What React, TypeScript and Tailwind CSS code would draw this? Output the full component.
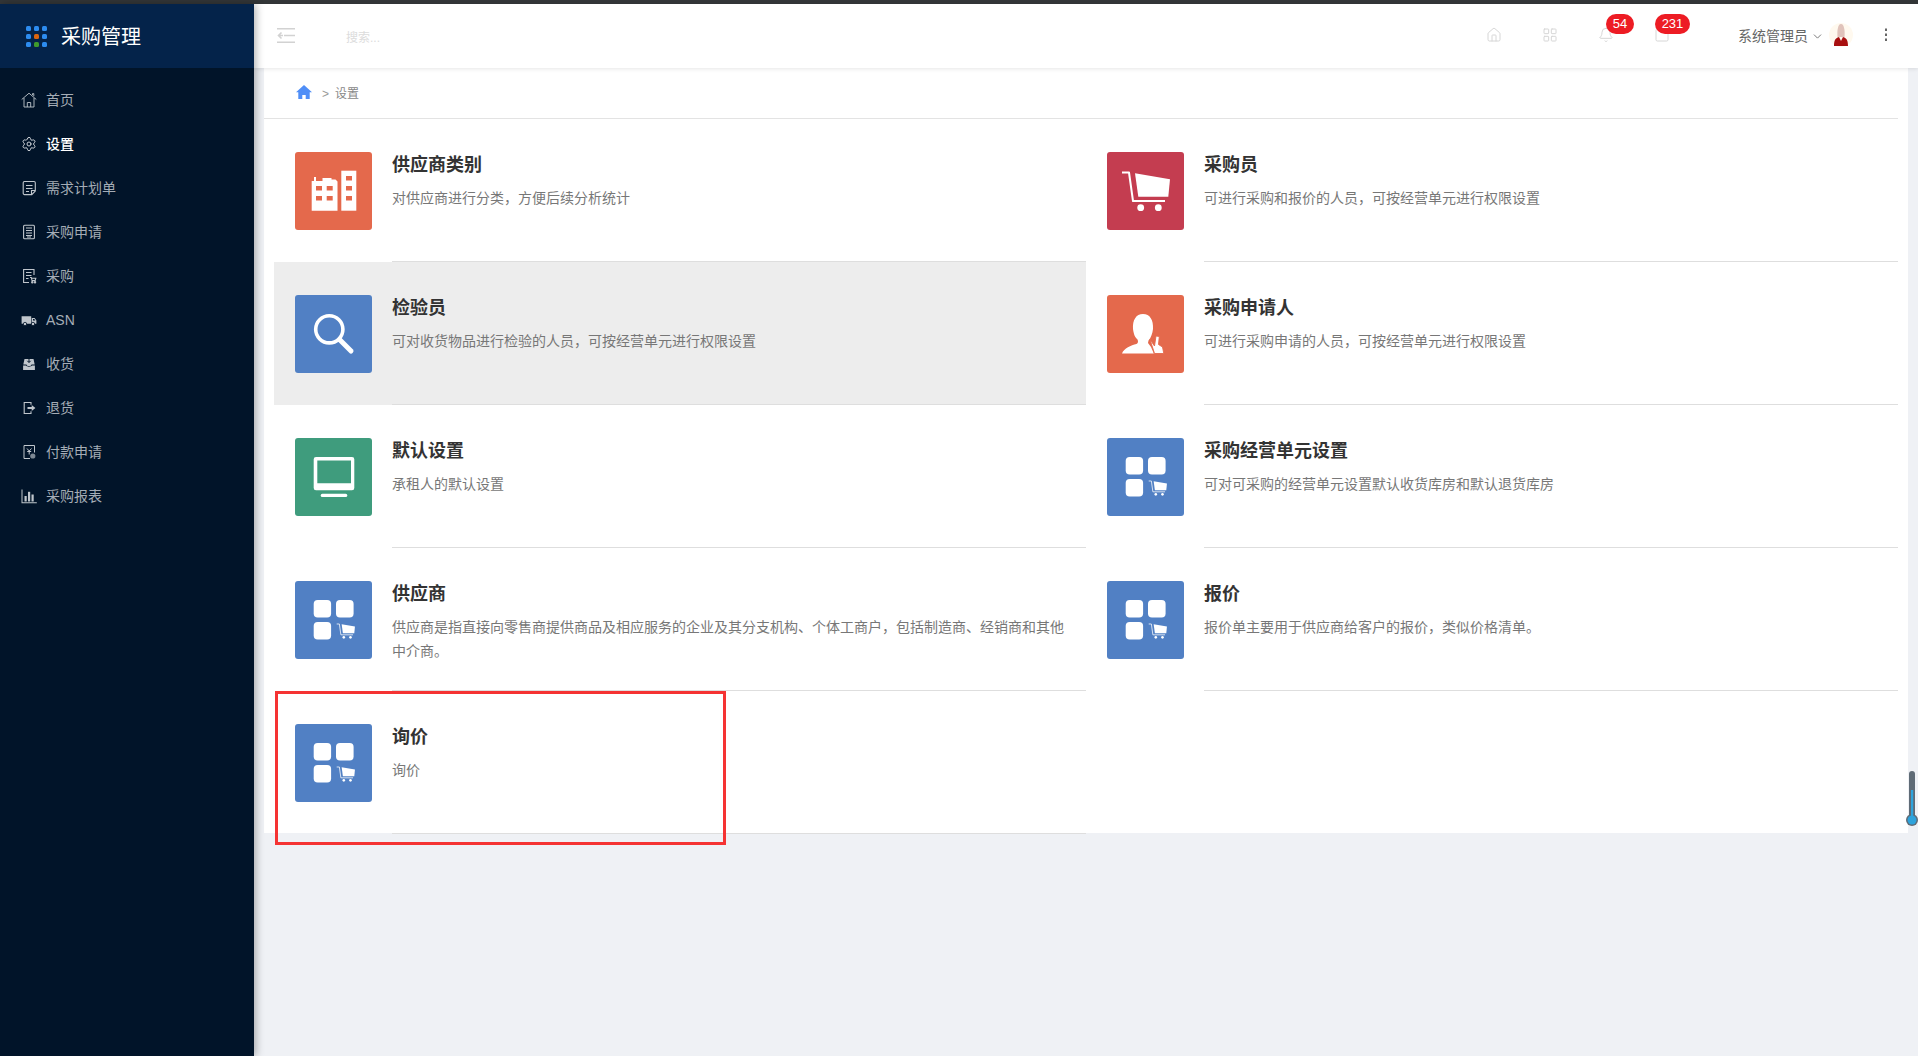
import React from "react";
import { Home, LayoutGrid, Bell, Square, ChevronDown, Settings } from "lucide-react";

const Cart = ({ x = 0, y = 0, s = 1, fill = "#fff" }: { x?: number; y?: number; s?: number; fill?: string }) => (
  <g transform={`translate(${x} ${y}) scale(${s})`}>
    <path d="M15 20.500h7l4 28.500h32" fill="none" stroke={fill} strokeWidth="2" strokeLinejoin="round" />
    <path d="M28 21.300 63 27.300 61.300 44.700H31.300Z" fill={fill} />
    <circle cx="33.700" cy="55.700" r="3.400" fill={fill} />
    <circle cx="51.300" cy="55.700" r="3.400" fill={fill} />
  </g>
);

const Building = () => (
  <svg viewBox="0 0 77 78" className="w-full h-full">
    <path d="M16.700 58.700V29h2.300v-4h2v4h6.500v-3h9v1.500h4l2 2V58.700Z" fill="#fff" />
    <rect x="46.300" y="18.700" width="15" height="40" fill="#fff" />
    <g fill="#e4694c">
      <rect x="21" y="34" width="6" height="4.500" />
      <rect x="31.700" y="34" width="6" height="4.500" />
      <rect x="21" y="44" width="6" height="4.500" />
      <rect x="31.700" y="44" width="6" height="4.500" />
      <rect x="51" y="24" width="6" height="4.500" />
      <rect x="51" y="34" width="6" height="4.500" />
      <rect x="51" y="44" width="6" height="4.500" />
    </g>
  </svg>
);
const Search = () => (
  <svg viewBox="0 0 77 78" className="w-full h-full" fill="none" stroke="#fff">
    <circle cx="34.300" cy="34.300" r="13.600" strokeWidth="3.600" />
    <path d="M44.500 44.500 56 56" strokeWidth="5" strokeLinecap="round" />
  </svg>
);
const BigCart = () => (
  <svg viewBox="0 0 77 78" className="w-full h-full">
    <Cart />
  </svg>
);
const Person = () => (
  <svg viewBox="0 0 77 78" className="w-full h-full">
    <path d="M15 58.500C17 53 24 50.500 29.500 49 31 48.300 31.500 46.500 30.500 44.500 27 41.500 26.500 37 26 34 25.500 25 29 19 36 19 43 19 46.500 25 46 34 45.500 38 44 43 41.500 45.500L41 48 44 52 46.800 58.500Z" fill="#fff" />
    <path d="M43 44.500 47.500 51 49 41 52.300 41.500 51.500 49.500 55.500 52 56.800 58.500H47.500Z" fill="#fff" stroke="#e4694c" strokeWidth="0.900" strokeLinejoin="round" />
  </svg>
);
const Monitor = () => (
  <svg viewBox="0 0 77 78" className="w-full h-full">
    <path fillRule="evenodd" d="M21 19h36a2.300 2.300 0 0 1 2.300 2.300v28.700a2.300 2.300 0 0 1-2.300 2.300H21a2.300 2.300 0 0 1-2.300-2.300V21.300A2.300 2.300 0 0 1 21 19ZM22.300 22.600V45.300H56V22.600Z" fill="#fff" />
    <rect x="25.700" y="55.700" width="26.600" height="3.300" rx="1.600" fill="#fff" />
  </svg>
);
const Apps = () => (
  <svg viewBox="0 0 77 78" className="w-full h-full">
    <rect x="18.700" y="19" width="17.400" height="17.400" rx="4" fill="#fff" />
    <rect x="41" y="19" width="17.600" height="17.400" rx="4" fill="#fff" />
    <rect x="18.700" y="41" width="17.400" height="17.600" rx="4" fill="#fff" />
    <Cart x={36} y={35.200} s={0.38} />
  </svg>
);

const Card = ({
  bg,
  icon,
  title,
  desc,
  active,
}: {
  bg: string;
  icon: React.ReactNode;
  title: string;
  desc: string;
  active?: boolean;
}) => (
  <div className={active ? "flex h-[143px] pl-[21px] bg-[#ededed]" : "flex h-[143px] pl-[21px]"}>
    <div className={`mt-[33px] w-[77px] h-[78px] rounded-[3px] shrink-0 ${bg}`}>{icon}</div>
    <div className="ml-[20px] flex-1 border-b border-[#dedede] pt-[34px] pr-[20px]">
      <div className="text-[18px] leading-[24px] font-bold text-[#333]">{title}</div>
      <div className="mt-[9px] text-[14px] leading-[24px] text-[#777]">{desc}</div>
    </div>
  </div>
);

const ic = "w-[16px] h-[16px] shrink-0";
const NavIcons: Record<string, React.ReactNode> = {
  home: (
    <svg viewBox="0 0 16 16" className={ic} fill="none" stroke="currentColor" strokeWidth="0.900">
      <path d="M.700 7.500 8 1.200l7.300 6.300M3 6v9h10V6M6.300 15v-4.500h3.400V15M11.500 3V1.600h1.300v2.600" />
    </svg>
  ),
  gear: <Settings className={ic} strokeWidth={1.4} size={14} />,
  note: (
    <svg viewBox="0 0 16 16" className={ic} fill="none" stroke="currentColor" strokeWidth="1.100">
      <path d="M3.500 1.500h9.500a1.300 1.300 0 0 1 1.300 1.300V11l-3.500 3.600H3.500a1.300 1.300 0 0 1-1.300-1.300V2.800a1.300 1.300 0 0 1 1.300-1.300ZM5 5.500h6.500M5 8.500h6.500M5 11.500h3M14.300 10.500h-3.800v4" />
    </svg>
  ),
  calc: (
    <svg viewBox="0 0 16 16" className={ic} fill="none" stroke="currentColor" strokeWidth="1.100">
      <rect x="2.600" y="1.200" width="10.800" height="13.600" rx="1" />
      <path d="M5 4h6M5 6.500h6M5 9h6M5 11.500h6M6 13h4" />
    </svg>
  ),
  buy: (
    <svg viewBox="0 0 16 16" className={ic} fill="none" stroke="currentColor" strokeWidth="1.100">
      <path d="M13 7V1.500H2.600v13H8M5 4.500h5.500M5 7.500h5.500M5 10.500h2.500" />
      <path d="M9 9.500h1.300l.7 3h3.200l.6-2.300H10.600" />
      <circle cx="11.300" cy="14.200" r=".7" />
      <circle cx="14" cy="14.200" r=".7" />
    </svg>
  ),
  truck: (
    <svg viewBox="0 0 16 16" className={ic} fill="currentColor">
      <path d="M.6 4.200h9.600v7.600H.6ZM10.800 6h2.800l1.800 2.400v3.400h-4.600Z" />
      <circle cx="4" cy="12" r="1.700" stroke="#011429" strokeWidth=".8" />
      <circle cx="12" cy="12" r="1.700" stroke="#011429" strokeWidth=".8" />
      <path d="M12 7h1.300l1 1.400H12Z" fill="#011429" />
    </svg>
  ),
  inbox: (
    <svg viewBox="0 0 16 16" className={ic} fill="currentColor">
      <path d="M3.500 3h9l1.200 5.500H10.500c0 2-5 2-5 0H2.300Z" />
      <path d="M2.100 9.500h2.800c.8 1.500 5.400 1.500 6.200 0h2.800v4.500H2.100Z" />
      <path d="M8 2.500v3.800M6.300 4.800 8 6.500l1.700-1.700" stroke="#011429" fill="none" strokeWidth="1" />
    </svg>
  ),
  out: (
    <svg viewBox="0 0 16 16" className={ic} fill="none" stroke="currentColor" strokeWidth="1.100">
      <path d="M10 4.800V2.500H3.200v11H10v-2.300" />
      <path d="M6.500 7h4.200V5l3.700 3-3.700 3V9H6.500Z" fill="currentColor" stroke="none" />
    </svg>
  ),
  pay: (
    <svg viewBox="0 0 16 16" className={ic} fill="none" stroke="currentColor" strokeWidth="1">
      <path d="M9 14.500H3V1.500h10.500v7" />
      <path d="M6 4.500 8.200 7l2.300-2.500M6.200 7.500h4M8.200 7v3.500" />
      <circle cx="11.800" cy="12" r="2.600" fill="currentColor" opacity=".65" stroke="none" />
    </svg>
  ),
  chart: (
    <svg viewBox="0 0 16 16" className={ic} fill="currentColor">
      <path d="M.5 1.500h1v12.700h14.300v1H.5Z" />
      <rect x="3.500" y="8" width="2.200" height="5.500" />
      <rect x="7" y="3.800" width="2.200" height="9.700" />
      <rect x="10.500" y="6.500" width="2.200" height="7" />
    </svg>
  ),
};

const nav = [
  ["home", "首页"],
  ["gear", "设置"],
  ["note", "需求计划单"],
  ["calc", "采购申请"],
  ["buy", "采购"],
  ["truck", "ASN"],
  ["inbox", "收货"],
  ["out", "退货"],
  ["pay", "付款申请"],
  ["chart", "采购报表"],
];

export default function App() {
  const dot = "w-[5px] h-[5px] rounded-[1.5px] bg-[#2d8cf0]";
  return (
    <div className="relative w-[1918px] h-[1056px] overflow-hidden flex flex-col bg-[#eff1f5] font-['Liberation_Sans','Noto_Sans_CJK_SC',sans-serif]">
      <div className="h-[4px] bg-[#333638] shrink-0" />
      <div className="flex flex-1 min-h-0">
        <aside className="relative z-10 w-[254px] shrink-0 bg-[#011429] shadow-[2px_0_8px_rgba(0,0,0,0.3)]">
          <div className="h-[64px] bg-[#04234a] flex items-center pl-[26px]">
            <div className="grid grid-cols-3 gap-[3px]">
              <div className={dot} />
              <div className={dot} />
              <div className={dot} />
              <div className={dot} />
              <div className="w-[5px] h-[5px] rounded-[1.5px] bg-[#d9640f]" />
              <div className={dot} />
              <div className={dot} />
              <div className="w-[5px] h-[5px] rounded-[1.5px] bg-[#3f9a2c]" />
              <div className={dot} />
            </div>
            <span className="ml-[14px] mt-[2px] text-[20px] text-white">采购管理</span>
          </div>
          <nav className="pt-[10px]">
            {nav.map(([k, label], i) => (
              <div
                key={k}
                className={
                  i === 1
                    ? "h-[44px] flex items-center pl-[21px] gap-[9px] text-[14px] text-white font-medium"
                    : "h-[44px] flex items-center pl-[21px] gap-[9px] text-[14px] text-[#a5adb6]"
                }
              >
                <span className={i === 1 ? "text-[#d5d9de]" : "text-[#c0c6cc]"}>{NavIcons[k]}</span>
                <span>{label}</span>
              </div>
            ))}
          </nav>
        </aside>
        <main className="flex-1 min-w-0 flex flex-col">
          <header className="relative h-[64px] shrink-0 bg-white shadow-[0_1px_4px_rgba(0,0,0,0.1)] flex items-center pl-[23px] pr-[30px]">
            <svg viewBox="0 0 18 15" className="w-[18px] h-[15px] -mt-[1px]" fill="none" stroke="#d2d2d2" strokeWidth="1.600">
              <path d="M0 .8h18M7 7.500h11M0 14.200h18M4.500 4.500 1.500 7.500l3 3M1.500 7.500H6" />
            </svg>
            <span className="ml-[51px] mt-[3px] text-[12px] text-[#dcdcdc]">搜索...</span>
            <div className="ml-auto flex items-center text-[#d6d6d6]">
              <div className="w-[56px] flex justify-center -mt-[2px]">
                <Home size={16} strokeWidth={1.5} />
              </div>
              <div className="w-[56px] flex justify-center -mt-[2px]">
                <LayoutGrid size={16} strokeWidth={1.5} />
              </div>
              <div className="relative w-[56px] flex justify-center -mt-[2px]">
                <Bell size={16} strokeWidth={1.5} />
                <span className="absolute left-[28px] -top-[13px] w-[28px] h-[20px] rounded-full bg-[#ed1c24] text-white text-[13px] leading-[20px] text-center">54</span>
              </div>
              <div className="relative w-[56px] flex justify-center -mt-[2px]">
                <Square size={16} strokeWidth={1.5} />
                <span className="absolute left-[21px] -top-[13px] w-[35px] h-[20px] rounded-full bg-[#ed1c24] text-white text-[13px] leading-[20px] text-center">231</span>
              </div>
            </div>
            <span className="ml-[48px] text-[14px] text-[#666]">系统管理员</span>
            <ChevronDown size={13} strokeWidth={1.8} className="ml-[3px] text-[#777]" />
            <svg viewBox="0 0 24 24" className="ml-[5px] w-[24px] h-[24px] -mt-[2px]">
              <circle cx="12" cy="12" r="12" fill="#fff9ef" />
              <path d="M8.500 14C8 9 8.500 1 12 1s4 8 3.500 13Z" fill="#e0c3bb" />
              <path d="M5 23c0-5 1-8 5-9l2 4 2-4c4 1 5 4 5 9Z" fill="#a80f0f" />
            </svg>
            <svg viewBox="0 0 4 14" className="ml-[31px] w-[4px] h-[14px] -mt-[2px]" fill="#666">
              <rect x="1" y="0.500" width="2" height="2.500" />
              <rect x="1" y="5.500" width="2" height="2.500" />
              <rect x="1" y="10.500" width="2" height="2.500" />
            </svg>
          </header>
          <div className="mx-[10px] bg-white h-[765px] shrink-0">
            <div className="mr-[10px] h-[51px] border-b border-[#e3e3e3] flex items-center pl-[32px] text-[12px] text-[#888]">
              <svg viewBox="0 0 16 14" className="w-[16px] h-[14px] -mt-[3px]" fill="#4f8ef7">
                <path d="M8 0 0 7.200h2.300V14h4v-4h3.400v4h4V7.200H16Z" />
              </svg>
              <span className="ml-[10px] mt-[2px] text-[#999]">&gt;</span>
              <span className="ml-[6px] mt-[2px]">设置</span>
            </div>
            <div className="mx-[10px] grid grid-cols-[812px_812px]">
              <Card bg="bg-[#e4694c]" icon={<Building />} title="供应商类别" desc="对供应商进行分类，方便后续分析统计" />
              <Card bg="bg-[#c43d50]" icon={<BigCart />} title="采购员" desc="可进行采购和报价的人员，可按经营单元进行权限设置" />
              <Card active bg="bg-[#5180c4]" icon={<Search />} title="检验员" desc="可对收货物品进行检验的人员，可按经营单元进行权限设置" />
              <Card bg="bg-[#e4694c]" icon={<Person />} title="采购申请人" desc="可进行采购申请的人员，可按经营单元进行权限设置" />
              <Card bg="bg-[#3f9c7d]" icon={<Monitor />} title="默认设置" desc="承租人的默认设置" />
              <Card bg="bg-[#5180c4]" icon={<Apps />} title="采购经营单元设置" desc="可对可采购的经营单元设置默认收货库房和默认退货库房" />
              <Card bg="bg-[#5180c4]" icon={<Apps />} title="供应商" desc="供应商是指直接向零售商提供商品及相应服务的企业及其分支机构、个体工商户，包括制造商、经销商和其他中介商。" />
              <Card bg="bg-[#5180c4]" icon={<Apps />} title="报价" desc="报价单主要用于供应商给客户的报价，类似价格清单。" />
              <Card bg="bg-[#5180c4]" icon={<Apps />} title="询价" desc="询价" />
            </div>
          </div>
        </main>
      </div>
      <div className="absolute left-[275px] top-[691px] w-[451px] h-[154px] border-[3px] border-[#f53333] pointer-events-none" />
      <svg viewBox="0 0 12 58" className="absolute left-[1906px] top-[770px] w-[12px] h-[58px]">
        <rect x="3" y="1" width="6" height="48" rx="3" fill="#5f6b76" />
        <circle cx="6" cy="50" r="6" fill="#5f6b76" />
        <circle cx="6" cy="50" r="4.500" fill="#2ea3dc" />
        <rect x="5" y="20" width="2.200" height="28" fill="#2ea3dc" />
      </svg>
    </div>
  );
}
